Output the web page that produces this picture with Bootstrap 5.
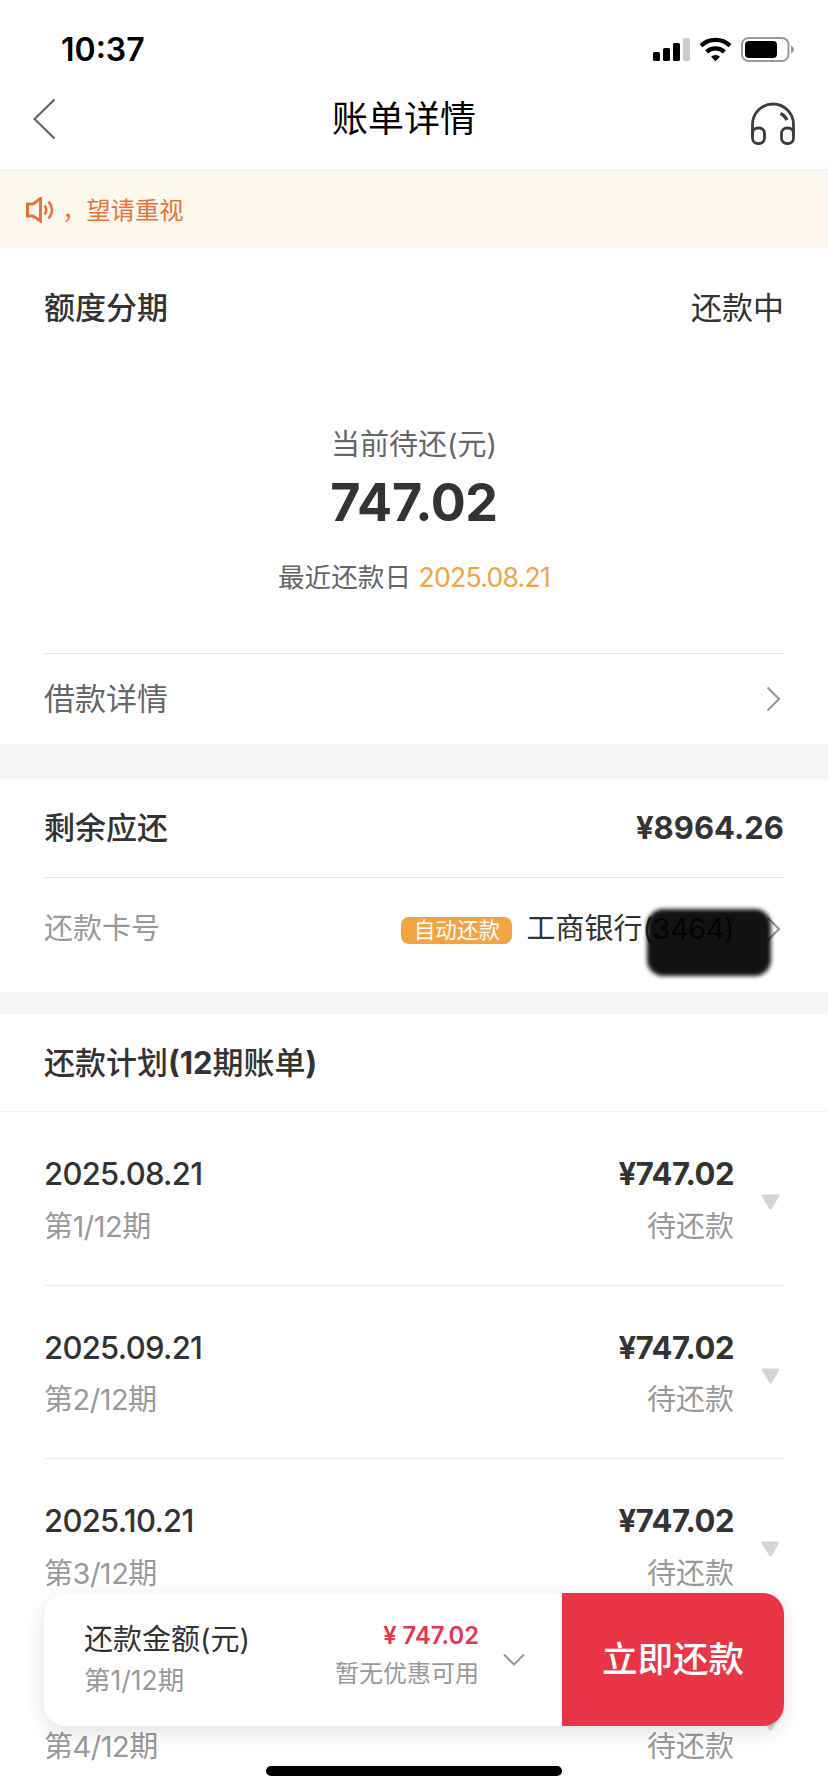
<!DOCTYPE html>
<html lang="zh-CN">
<head>
<meta charset="utf-8">
<meta name="viewport" content="width=device-width, initial-scale=1">
<title>账单详情</title>
<link rel="stylesheet" href="https://cdn.jsdelivr.net/npm/bootstrap@5.3.0/dist/css/bootstrap.min.css">
<style>
  body { font-family: Inter, "Noto Sans CJK SC", sans-serif; font-size: 31px; line-height: 40px; color: #333; background: #fff; height: 1792px; overflow: hidden; }
  svg { display: block; flex: none; }
  .side { padding-left: 44px; padding-right: 44px; }
  .status-bar { height: 98px; padding: 2px 32px 0 61px; color: #000; }
  .clock { font-size: 32px; font-weight: 600; }
  .title-bar { height: 73px; border-bottom: 2px solid #f3f3f3; padding: 0 32px 30px 33px; }
  .page-title { font-size: 36px; color: #000; margin-right: 15px; }
  .notice { height: 77px; background: #fdf8ee; color: #e8733a; font-size: 24.3px; padding-left: 26px; }
  .strong { font-weight: 500; }
  .hairline { border-bottom: 1px solid #e8e8e8; }
  .c6 { color: #666; } .c9 { color: #999; }
  .f29 { font-size: 29px; }
  .head-row { height: 120px; }
  .due { margin-top: 57px; padding-bottom: 56px; }
  .due-amount { font-size: 52px; font-weight: 700; line-height: 60px; margin: 8px 0 24px; letter-spacing: -.4px; }
  .due-date { font-size: 26.6px; }
  .orange { color: #f0a443; }
  .due-date .orange { letter-spacing: -.75px; }
  .detail-row { height: 90px; }
  .gap-band { background: #f4f5f7; height: 35px; }
  .gap-band.thin { height: 22px; }
  .sum-row { height: 99px; }
  .card-row { height: 114px; padding-bottom: 12px; }
  .auto-tag { background: #f0a443; color: #fff; font-size: 21.6px; line-height: 27px; height: 27px; width: 111px; border-radius: 8px; margin-right: 14px; margin-top: 2px; }
  .chevron { margin-right: 2px; }
  .card-row .chevron { margin-left: 22px; }
  .card-tail { letter-spacing: -.5px; }
  .redaction { left: 603px; top: 31px; width: 124px; height: 67px; border-radius: 16px; background: rgba(0,0,0,.93); filter: blur(2.2px); }
  .plan-head { height: 98px; border-bottom: 1px solid #efefef; }
  .term { height: 173.6px; padding-top: 42px; border-bottom: 1.4px solid #ebebeb; }
  .term .sub { margin-top: 12.5px; }
  .tnum { letter-spacing: -.5px; }
  .day { font-weight: 500; letter-spacing: -.7px; }
  .arrow-col { margin: 40px 4px 0 27px; }
  .pay-bar { left: 44px; right: 44px; top: 1593px; height: 133px; border-radius: 21px; background: #fff; box-shadow: 0 6px 20px rgba(0,0,0,.12); z-index: 5; }
  .pay-main { padding: 0 37px 0 40px; }
  .pay-term { font-size: 26.5px; }
  .pay-sum { padding-bottom: 10px; line-height: 38px; }
  .pay-note { font-size: 24px; }
  .pay-btn { width: 222px; background: #e83646; color: #fff; font-size: 35.5px; font-weight: 500; border-radius: 0 21px 21px 0; }
  .red { color: #e83650; font-size: 23.8px; font-weight: 600; }
  .home-bar { left: 266px; top: 1766px; width: 296px; height: 10px; border-radius: 5px; background: #000; z-index: 6; }
</style>
</head>
<body>
<header>
  <div class="status-bar d-flex align-items-center justify-content-between">
    <span class="clock">10:37</span>
    <svg width="144" height="28" viewBox="652 36 144 28">
      <rect x="653" y="52" width="7" height="9" rx="1.5"/><rect x="663" y="48" width="7" height="13" rx="1.5"/><rect x="673" y="43" width="7" height="18" rx="1.5"/><rect x="683" y="38" width="7" height="23" rx="1.5" fill="#ccc"/>
      <g fill="none" stroke="#000" stroke-width="4.3"><path d="M701 45.6a21 21 0 0 1 29 0"/><path d="M706.6 51.9a13 13 0 0 1 17.8 0"/></g>
      <path d="M711 56.8a6.8 6.8 0 0 1 9 0l-4.500 4.500z"/>
      <rect x="742" y="38" width="46.500" height="23" rx="6.500" fill="none" stroke="#999" stroke-width="2"/>
      <rect x="745" y="41" width="32" height="17" rx="4"/><path d="M791 45.500c4 1.500 4 6.500 0 8z" fill="#999"/>
    </svg>
  </div>
  <div class="title-bar d-flex align-items-center justify-content-between">
    <svg width="40" height="42" viewBox="33 98 40 42" fill="none" stroke="#666" stroke-width="2.200"><path d="M54.500 99.500 34.500 119l20 19.500"/></svg>
    <span class="page-title">账单详情</span>
    <svg class="mt-2" width="46" height="44" viewBox="750 101 46 44" fill="none" stroke="#3c3c3c" stroke-width="2.800"><path d="M752.500 136v-11.500a20.500 20.500 0 0 1 41 0V136"/><rect x="752.500" y="128" width="12" height="15.500" rx="5.500"/><rect x="781.500" y="128" width="12" height="15.500" rx="5.500"/><path d="M780.500 113.500q4.500 2 6.500 6.500" stroke-width="3.200"/></svg>
  </div>
</header>
<div class="notice d-flex align-items-center">
  <svg width="28" height="26" viewBox="26 197 28 26" fill="none" stroke="#e8733a" stroke-width="3"><path d="M27.500 204v12h5.500l7.500 5V198.500l-7.500 5.500z"/><path d="M44.500 205.500q3.500 4.500 0 9M48.500 201.500q7 8.500 0 17" stroke-width="2.500"/></svg>
  <span class="ms-2">，望请重视</span>
</div>
<main>
  <section class="side">
    <div class="head-row d-flex align-items-center justify-content-between"><span class="strong">额度分期</span><span>还款中</span></div>
    <div class="due text-center hairline">
      <div class="f29 c6">当前待还(元)</div>
      <div class="due-amount">747.02</div>
      <div class="due-date c6">最近还款日 <span class="orange">2025.08.21</span></div>
    </div>
    <div class="detail-row d-flex align-items-center justify-content-between"><span class="c6">借款详情</span>
      <svg class="chevron" width="18" height="26" viewBox="0 0 18 26" fill="none" stroke="#999" stroke-width="2.200"><path d="M3.500 1.500 15 13 3.500 24.500"/></svg></div>
  </section>
  <div class="gap-band"></div>
  <section class="side">
    <div class="sum-row hairline d-flex align-items-center justify-content-between"><span class="strong">剩余应还</span><b class="fw-bold">¥8964.26</b></div>
    <div class="card-row position-relative d-flex align-items-center">
      <span class="f29 c9 me-auto">还款卡号</span>
      <span class="auto-tag d-flex justify-content-center">自动还款</span>
      <span class="f29">工商银行<span class="card-tail">(3464)</span></span>
      <svg class="chevron" width="26" height="26" viewBox="-8 0 26 26" fill="none" stroke="#999" stroke-width="2.200"><path d="M3.500 1.500 15 13 3.500 24.500"/></svg>
      <span class="redaction position-absolute"></span>
    </div>
  </section>
  <div class="gap-band thin"></div>
  <section>
    <div class="plan-head side d-flex align-items-center"><span class="strong">还款计划<b class="fw-bold">(12</b>期账单<b class="fw-bold">)</b></span></div>
    <div class="side">
      <div class="term d-flex"><div class="me-auto"><div class="day">2025.08.21</div><div class="sub f29 c9 tnum">第1/12期</div></div><div class="text-end"><div class="fw-bold tnum">¥747.02</div><div class="sub f29 c9">待还款</div></div><svg class="arrow-col" width="19" height="16"><path d="M2 .5h15q2 0 1 2l-7 12q-1.500 2-3 0L1 2.500q-1-2 1-2z" fill="#d4d4d4"/></svg></div>
      <div class="term d-flex"><div class="me-auto"><div class="day">2025.09.21</div><div class="sub f29 c9 tnum">第2/12期</div></div><div class="text-end"><div class="fw-bold tnum">¥747.02</div><div class="sub f29 c9">待还款</div></div><svg class="arrow-col" width="19" height="16"><path d="M2 .5h15q2 0 1 2l-7 12q-1.500 2-3 0L1 2.500q-1-2 1-2z" fill="#d4d4d4"/></svg></div>
      <div class="term d-flex"><div class="me-auto"><div class="day">2025.10.21</div><div class="sub f29 c9 tnum">第3/12期</div></div><div class="text-end"><div class="fw-bold tnum">¥747.02</div><div class="sub f29 c9">待还款</div></div><svg class="arrow-col" width="19" height="16"><path d="M2 .5h15q2 0 1 2l-7 12q-1.500 2-3 0L1 2.500q-1-2 1-2z" fill="#d4d4d4"/></svg></div>
      <div class="term d-flex"><div class="me-auto"><div class="day">&nbsp;</div><div class="sub f29 c9 tnum">第4/12期</div></div><div class="text-end"><div>&nbsp;</div><div class="sub f29 c9">待还款</div></div><svg class="arrow-col" width="19" height="16"><path d="M2 .5h15q2 0 1 2l-7 12q-1.500 2-3 0L1 2.500q-1-2 1-2z" fill="#d4d4d4"/></svg></div>
    </div>
  </section>
</main>
<div class="pay-bar position-absolute d-flex">
  <div class="pay-main flex-grow-1 d-flex align-items-center">
    <div class="me-auto"><div class="f29">还款金额(元)</div><div class="pay-term c9">第1/12期</div></div>
    <div class="pay-sum text-end"><div class="red">¥ 747.02</div><div class="pay-note c9">暂无优惠可用</div></div>
    <svg class="ms-4" width="22" height="14" fill="none" stroke="#999" stroke-width="2"><path d="M1 1.500 11 11.500 21 1.500"/></svg>
  </div>
  <div class="pay-btn d-flex align-items-center justify-content-center">立即还款</div>
</div>
<div class="home-bar position-absolute"></div>
<script src="https://cdn.jsdelivr.net/npm/bootstrap@5.3.0/dist/js/bootstrap.bundle.min.js"></script>
</body>
</html>
